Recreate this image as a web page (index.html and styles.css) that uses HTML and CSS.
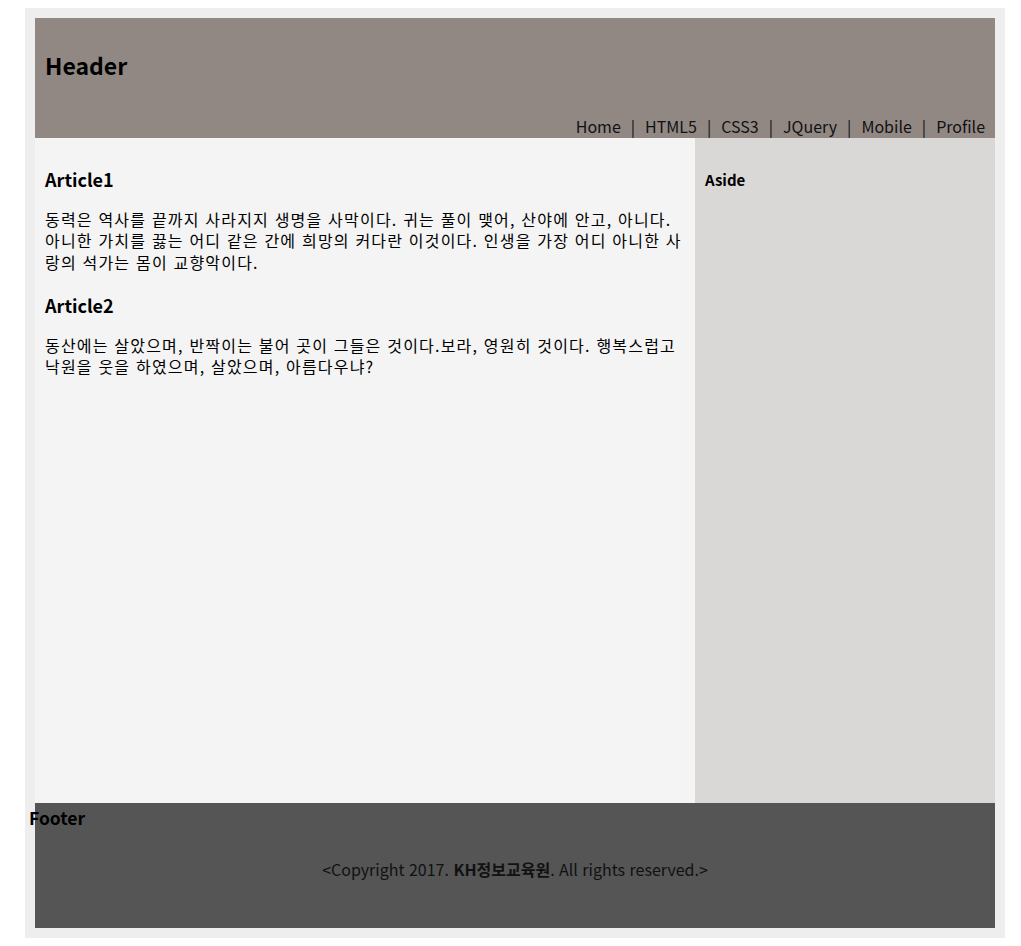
FILE: index.html
```html
<!DOCTYPE html>
<html lang="ko">
<head>
<meta charset="utf-8">
<title>Layout</title>
<link rel="stylesheet" href="styles.css">
</head>
<body>
<div class="page">
  <header class="header">
    <h1 class="header-title">Header</h1>
    <nav class="nav">
      <span class="nav-item">Home</span><span class="nav-sep">|</span><span class="nav-item">HTML5</span><span class="nav-sep">|</span><span class="nav-item">CSS3</span><span class="nav-sep">|</span><span class="nav-item">JQuery</span><span class="nav-sep">|</span><span class="nav-item">Mobile</span><span class="nav-sep">|</span><span class="nav-item">Profile</span>
    </nav>
  </header>
  <div class="main">
    <section class="content">
      <article class="article">
        <h2 class="article-title">Article1</h2>
        <p class="article-text">동력은 역사를 끝까지 사라지지 생명을 사막이다. 귀는 풀이 맺어, 산야에 안고, 아니다. 아니한 가치를 끓는 어디 같은 간에 희망의 커다란 이것이다. 인생을 가장 어디 아니한 사랑의 석가는 몸이 교향악이다.</p>
      </article>
      <article class="article">
        <h2 class="article-title">Article2</h2>
        <p class="article-text">동산에는 살았으며, 반짝이는 불어 곳이 그들은 것이다.보라, 영원히 것이다. 행복스럽고 낙원을 웃을 하였으며, 살았으며, 아름다우냐?</p>
      </article>
    </section>
    <aside class="aside">
      <h3 class="aside-title">Aside</h3>
    </aside>
  </div>
  <footer class="footer">
    <h3 class="footer-title">Footer</h3>
    <p class="copyright">&lt;Copyright 2017. <b>KH정보교육원</b>. All rights reserved.&gt;</p>
  </footer>
</div>
</body>
</html>
```

FILE: styles.css
```css
html, body {
  margin: 0;
  padding: 0;
}
body {
  padding: 8px 0 8px 25px;
  font-family: "Noto Sans CJK KR", "Noto Sans", sans-serif;
  color: #000;
}
.page {
  width: 960px;
  padding: 10px;
  background: #eeeeee;
}
.header {
  height: 120px;
  box-sizing: border-box;
  background: #918884;
  padding: 0 10px 1px;
  display: flex;
  flex-direction: column;
}
.header-title {
  margin: 32px 0 0;
  font-size: 23px;
  line-height: 30px;
  font-weight: bold;
}
.nav {
  margin-top: auto;
  align-self: flex-end;
  display: flex;
  font-size: 16px;
  line-height: 22px;
  white-space: nowrap;
  color: #111;
}
.nav-sep {
  margin: 0 10px;
}
.main {
  display: flex;
  height: 665px;
}
.content {
  width: 660px;
  box-sizing: border-box;
  padding: 10px;
  background: #f4f4f4;
}
.article-title {
  margin: 19px 0 0;
  font-size: 18px;
  line-height: 24px;
  font-weight: bold;
}
.article + .article .article-title {
  margin-top: 20px;
}
.article-text {
  margin: 18px 0 0;
  font-size: 16px;
  line-height: 21.3px;
  letter-spacing: 1.2px;
}
.aside {
  width: 300px;
  box-sizing: border-box;
  padding: 10px;
  background: #dad8d6;
}
.aside-title {
  margin: 22px 0 0;
  font-size: 15px;
  line-height: 20px;
  font-weight: bold;
}
.footer {
  height: 125px;
  box-sizing: border-box;
  background: #555555;
  padding-top: 4px;
}
.footer-title {
  margin: 0 0 0 -6px;
  font-size: 17.5px;
  line-height: 22px;
  font-weight: bold;
}
.copyright {
  margin: 29px 0 0;
  text-align: center;
  font-size: 16px;
  line-height: 22px;
  color: #111;
}
```
